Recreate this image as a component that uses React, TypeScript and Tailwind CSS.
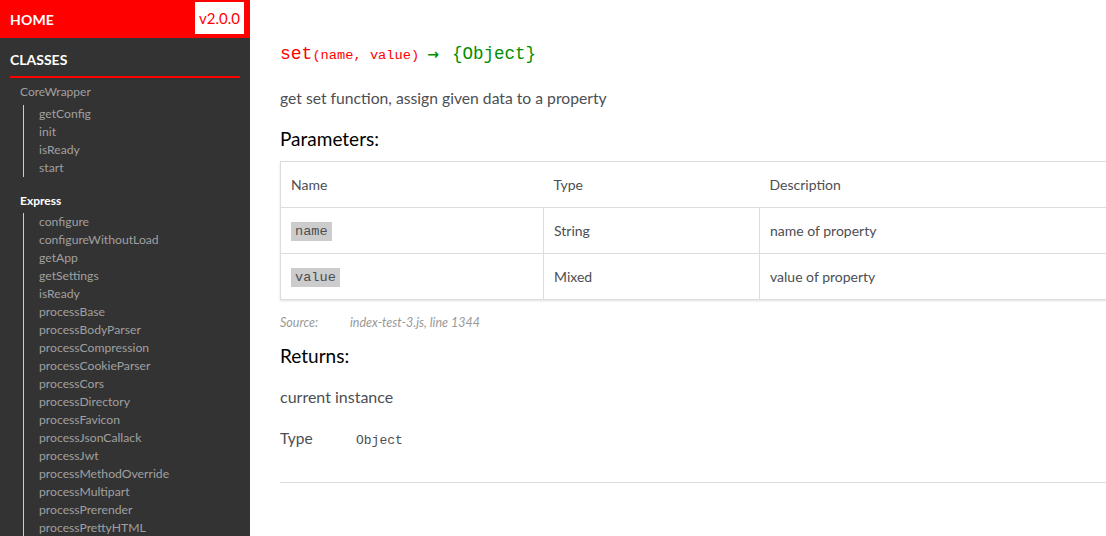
const core = ["getConfig", "init", "isReady", "start"];
const express = [
  "configure",
  "configureWithoutLoad",
  "getApp",
  "getSettings",
  "isReady",
  "processBase",
  "processBodyParser",
  "processCompression",
  "processCookieParser",
  "processCors",
  "processDirectory",
  "processFavicon",
  "processJsonCallack",
  "processJwt",
  "processMethodOverride",
  "processMultipart",
  "processPrerender",
  "processPrettyHTML",
  "processQuery",
  "processRoutes",
];

const params = [
  { name: "name", type: "String", desc: "name of property" },
  { name: "value", type: "Mixed", desc: "value of property" },
];

function NavGroup({ title, items, bold }: { title: string; items: string[]; bold?: boolean }) {
  return (
    <div>
      <p className={`ml-5 text-[12px] leading-[18px] ${bold ? "font-bold text-white" : "text-[#a0a0a0]"}`}>
        {title}
      </p>
      <ul className={`ml-[23px] ${bold ? "mt-[3px]" : "mt-[4px]"} border-l border-[#ccc] pl-[15px]`}>
        {items.map((it, i) => (
          <li key={i} className="text-[12.2px] leading-[18px] text-[#a0a0a0]">
            {it}
          </li>
        ))}
      </ul>
    </div>
  );
}

export default function App() {
  return (
    <div className="flex h-[536px] w-[1106px] overflow-hidden bg-white font-['Lato',sans-serif]">
      {/* sidebar */}
      <nav className="h-full w-[250px] shrink-0 overflow-hidden bg-[#333]">
        <div className="flex h-[38px] items-center justify-between bg-[#f00] pl-[10px] pr-[6px]">
          <span className="text-[14px] font-bold tracking-[0.01em] text-white">HOME</span>
          <span className="mt-[2px] flex h-[32px] w-[49px] items-center justify-center self-start bg-white text-[15px] text-[#f00]">
            v2.0.0
          </span>
        </div>
        <h3 className="mx-[10px] mt-[12px] border-b-2 border-b-[#f00] pb-[6px] text-[14px] font-bold leading-[20px] text-white">
          CLASSES
        </h3>
        <div className="mt-[5px]">
          <NavGroup title="CoreWrapper" items={core} />
        </div>
        <div className="mt-[15px]">
          <NavGroup title="Express" items={express} bold />
        </div>
      </nav>

      {/* main */}
      <main className="min-w-0 flex-1 overflow-hidden pl-[30px] pt-[42px]">
        <div className="w-[900px]">
          <h4 className="flex h-[24px] items-baseline font-['Liberation_Mono',monospace] leading-[24px]">
            <span className="text-[18px] text-[#f00]">set</span>
            <span className="text-[13.7px] text-[#f00]">(name, value)</span>
            <span className="ml-[8px] mr-[13px] font-['DejaVu_Sans',sans-serif] text-[14px] font-bold text-[#008f00]">→</span>
            <span className="text-[17.5px] text-[#008f00]">{"{Object}"}</span>
          </h4>
          <p className="mt-[22px] text-[15.7px] leading-[20px] text-[#4d4e53]">
            get set function, assign given data to a property
          </p>
          <h5 className="mt-[18px] text-[19px] leading-[26px] text-black">Parameters:</h5>

          <table className="mt-[9px] w-[860px] border-collapse text-[14px] text-[#4d4e53] shadow-[0_1px_2px_rgba(0,0,0,0.12)]">
            <thead>
              <tr className="h-[46px] border border-[#ddd]">
                <th className="w-[263px] px-[10px] text-left font-normal">Name</th>
                <th className="w-[216px] px-[10px] text-left font-normal">Type</th>
                <th className="px-[10px] text-left font-normal">Description</th>
              </tr>
            </thead>
            <tbody>
              {params.map((p) => (
                <tr key={p.name} className="h-[46px]">
                  <td className="border border-[#ddd] px-[10px]">
                    <code className="bg-[#ccc] px-[4px] py-[2px] font-['Liberation_Mono',monospace] text-[13.6px] text-[#4d4e53]">
                      {p.name}
                    </code>
                  </td>
                  <td className="border border-[#ddd] px-[10px]">{p.type}</td>
                  <td className="border border-[#ddd] px-[10px]">{p.desc}</td>
                </tr>
              ))}
            </tbody>
          </table>

          <div className="mt-[15px] flex text-[12.5px] italic leading-[16px] text-[#999]">
            <span className="w-[70px]">Source:</span>
            <span>index-test-3.js, line 1344</span>
          </div>

          <h5 className="mt-[12px] text-[19px] leading-[26px] text-black">Returns:</h5>
          <p className="mt-[18px] text-[16px] leading-[20px] text-[#4d4e53]">current instance</p>
          <div className="mt-[21px] flex items-baseline leading-[20px]">
            <span className="w-[76px] text-[15.5px] text-[#4d4e53]">Type</span>
            <span className="font-['Liberation_Mono',monospace] text-[13px] text-[#4d4e53]">Object</span>
          </div>
          <hr className="mt-[31px] w-[840px] border-t border-[#ddd]" />
        </div>
      </main>
    </div>
  );
}
